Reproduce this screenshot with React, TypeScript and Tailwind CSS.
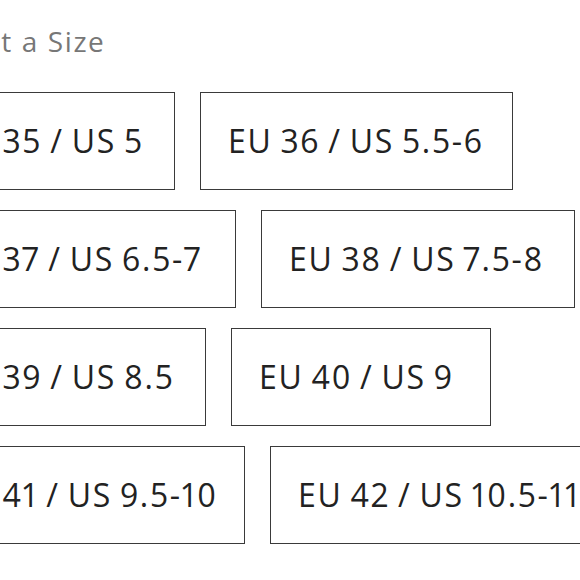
import React from "react";

const rows: { label: string; w: number }[][] = [
  [
    { label: "EU 35 / US 5", w: 253 },
    { label: "EU 36 / US 5.5-6", w: 313 },
  ],
  [
    { label: "EU 37 / US 6.5-7", w: 314 },
    { label: "EU 38 / US 7.5-8", w: 314 },
  ],
  [
    { label: "EU 39 / US 8.5", w: 284 },
    { label: "EU 40 / US 9", w: 260 },
  ],
  [
    { label: "EU 41 / US 9.5-10", w: 323 },
    { label: "EU 42 / US 10.5-11", w: 334 },
  ],
];

export default function App() {
  return (
    <div
      className="w-[580px] h-[580px] overflow-hidden bg-white"
      style={{ fontFamily: '"Open Sans", "Liberation Sans", sans-serif' }}
    >
      <div className="ml-[-78px] pt-[23px] w-[700px]">
        <div className="ml-[4px] mb-[33px] text-[28px] leading-[36px] tracking-[1.6px] text-[#777777]">
          Select a Size
        </div>
        <div className="flex flex-col gap-y-[20px]">
          {rows.map((row, i) => (
            <div key={i} className="flex gap-x-[25px]">
              {row.map((b) => (
                <button
                  key={b.label}
                  type="button"
                  className="h-[98px] shrink-0 flex items-center justify-start pl-[27px] border border-[#3a3a3a] bg-white text-[32px] tracking-[1.7px] [word-spacing:-2px] proportional-nums text-[#222222] whitespace-nowrap"
                  style={{ width: b.w }}
                >
                  {b.label}
                </button>
              ))}
            </div>
          ))}
        </div>
      </div>
    </div>
  );
}
